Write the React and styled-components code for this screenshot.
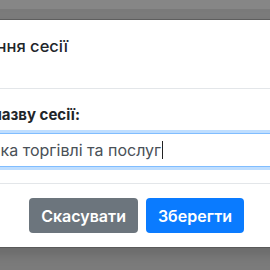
import React from "react";
import styled, { createGlobalStyle } from "styled-components";

const Global = createGlobalStyle`
  html, body { margin: 0; padding: 0; }
  body { background: #7e7e7e; font-family: Inter, "Noto Sans", sans-serif; }
`;

const Page = styled.div`
  width: 270px;
  height: 270px;
  overflow: hidden;
  background: #7b7b7b;
  display: flex;
  flex-direction: column;
`;

const Shade = styled.div`
  height: 9px;
  background: #868686;
  border-bottom: 3px solid #7a7a7a;
  margin-bottom: 7px;
  flex: none;
`;

const Dialog = styled.div`
  flex: none;
  margin-left: -125px;
  width: 425px;
  background: #fff;
  border-top: 1px solid #5e5e5e;
  border-bottom: 1px solid #5a5a5a;
  box-shadow: 0 8px 10px rgba(0, 0, 0, 0.12);
  display: flex;
  flex-direction: column;
`;

const Header = styled.div`
  box-sizing: border-box;
  height: 69px;
  padding: 14px 16px 0 9px;
  border-bottom: 1px solid #e3e6e9;
  display: flex;
  align-items: flex-start;
`;

const Title = styled.h5`
  margin: 0;
  font-size: 16.5px;
  line-height: 24px;
  font-weight: 500;
  color: #212529;
`;

const Body = styled.div`
  box-sizing: border-box;
  height: 94px;
  padding: 15px 16px 16px;
  display: flex;
  flex-direction: column;
`;

const Label = styled.label`
  font-size: 15px;
  line-height: 22px;
  font-weight: 700;
  color: #212529;
  margin-bottom: 7px;
`;

const Field = styled.div`
  box-sizing: border-box;
  height: 34px;
  padding: 0 12px 0 37px;
  border: 1px solid #80bdff;
  border-radius: 4px;
  box-shadow: 0 0 0 3px rgba(0, 123, 255, 0.25);
  display: flex;
  align-items: center;
  font-size: 16px;
  color: #495057;
  white-space: nowrap;
`;

const Caret = styled.span`
  display: inline-block;
  width: 1px;
  height: 18px;
  background: #222;
  margin-left: 1px;
`;

const Footer = styled.div`
  box-sizing: border-box;
  height: 64px;
  border-top: 1px solid #e3e6e9;
  padding: 14px 56px 14px 16px;
  display: flex;
  justify-content: flex-end;
  align-items: flex-start;
  gap: 8px;
`;

const Button = styled.button`
  box-sizing: border-box;
  height: 35px;
  padding: 0 12px;
  border: none;
  border-radius: 4px;
  font-family: inherit;
  font-size: 16px;
  font-weight: 600;
  color: #fff;
  background: ${(p) => (p.$variant === "primary" ? "#0a7bff" : "#6c757d")};
  cursor: pointer;
`;

export default function App() {
  return (
    <>
      <Global />
      <Page>
        <Shade />
        <Dialog>
          <Header>
            <Title>Перейменування сесії</Title>
          </Header>
          <Body>
            <Label>Введіть нову назву сесії:</Label>
            <Field>
              Статистика торгівлі та послуг
              <Caret />
            </Field>
          </Body>
          <Footer>
            <Button>Скасувати</Button>
            <Button $variant="primary">Зберегти</Button>
          </Footer>
        </Dialog>
      </Page>
    </>
  );
}
